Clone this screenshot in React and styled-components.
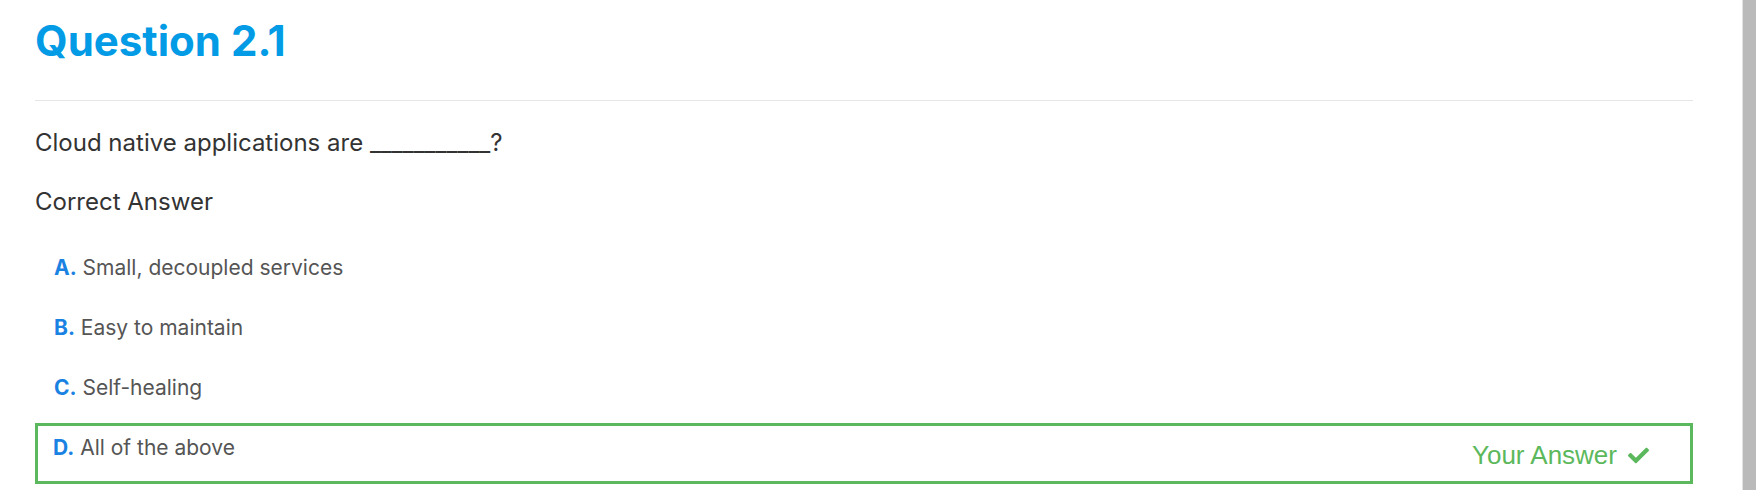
import React from 'react';
import styled, { createGlobalStyle } from 'styled-components';
import { FaCheck } from 'react-icons/fa';

const GlobalStyle = createGlobalStyle`
  html, body {
    margin: 0;
    padding: 0;
    background: #fff;
  }
  body {
    font-family: Inter, "Noto Sans", sans-serif;
  }
`;

const options = [
  { key: 'A', text: 'Small, decoupled services' },
  { key: 'B', text: 'Easy to maintain' },
  { key: 'C', text: 'Self-healing' },
  { key: 'D', text: 'All of the above', chosen: true },
];

function App() {
  return (
    <Page>
      <GlobalStyle />
      <Content>
        <Title>Question 2.1</Title>
        <Divider />
        <QuestionText>Cloud native applications are ___________?</QuestionText>
        <SubHeading>Correct Answer</SubHeading>
        <OptionList>
          {options.map((o) => (
            <Option key={o.key} chosen={o.chosen}>
              <OptionText>
                <Letter>{o.key}.</Letter> {o.text}
              </OptionText>
              {o.chosen && (
                <YourAnswer>
                  Your Answer <FaCheck />
                </YourAnswer>
              )}
            </Option>
          ))}
        </OptionList>
      </Content>
      <Scrollbar />
    </Page>
  );
}

export default App;

const Page = styled.div`
  display: flex;
  width: 1756px;
  height: 490px;
  overflow: hidden;
`;

const Content = styled.div`
  flex: 1;
  padding: 0 49px 0 35px;
`;

const Title = styled.h1`
  margin: 0;
  padding-top: 14px;
  font-size: 42px;
  line-height: 54px;
  font-weight: 700;
  color: #039be5;
`;

const Divider = styled.hr`
  margin: 32px 0 0;
  border: 0;
  border-top: 1px solid #e6e6e6;
`;

const QuestionText = styled.p`
  margin: 0;
  padding-top: 26px;
  font-size: 24px;
  line-height: 32px;
  color: #333;
`;

const SubHeading = styled.p`
  margin: 0;
  padding-top: 27px;
  font-size: 24px;
  line-height: 32px;
  color: #333;
`;

const OptionList = styled.div`
  display: flex;
  flex-direction: column;
  margin-top: 20px;
`;

const Option = styled.div`
  display: flex;
  justify-content: space-between;
  align-items: flex-start;
  box-sizing: border-box;
  height: ${({ chosen }) => (chosen ? '61px' : '60px')};
  margin-top: ${({ chosen }) => (chosen ? '5px' : '0')};
  padding: ${({ chosen }) => (chosen ? '8px 41px 0 15px' : '16px 41px 0 19px')};
  border: ${({ chosen }) => (chosen ? '3px solid #5cb85c' : '0')};
`;

const OptionText = styled.div`
  font-size: 21px;
  line-height: 28px;
  color: #555;
`;

const Letter = styled.b`
  color: #1a82e2;
  font-weight: 700;
`;

const YourAnswer = styled.div`
  display: flex;
  align-items: center;
  gap: 11px;
  margin-top: 6px;
  font-family: "Liberation Sans", Arial, sans-serif;
  font-size: 26px;
  line-height: 30px;
  color: #5cb85c;
  svg {
    font-size: 21px;
  }
`;

const Scrollbar = styled.div`
  width: 13px;
  flex-shrink: 0;
  background: #bababa;
  border-left: 1px solid #e2e2e2;
`;
